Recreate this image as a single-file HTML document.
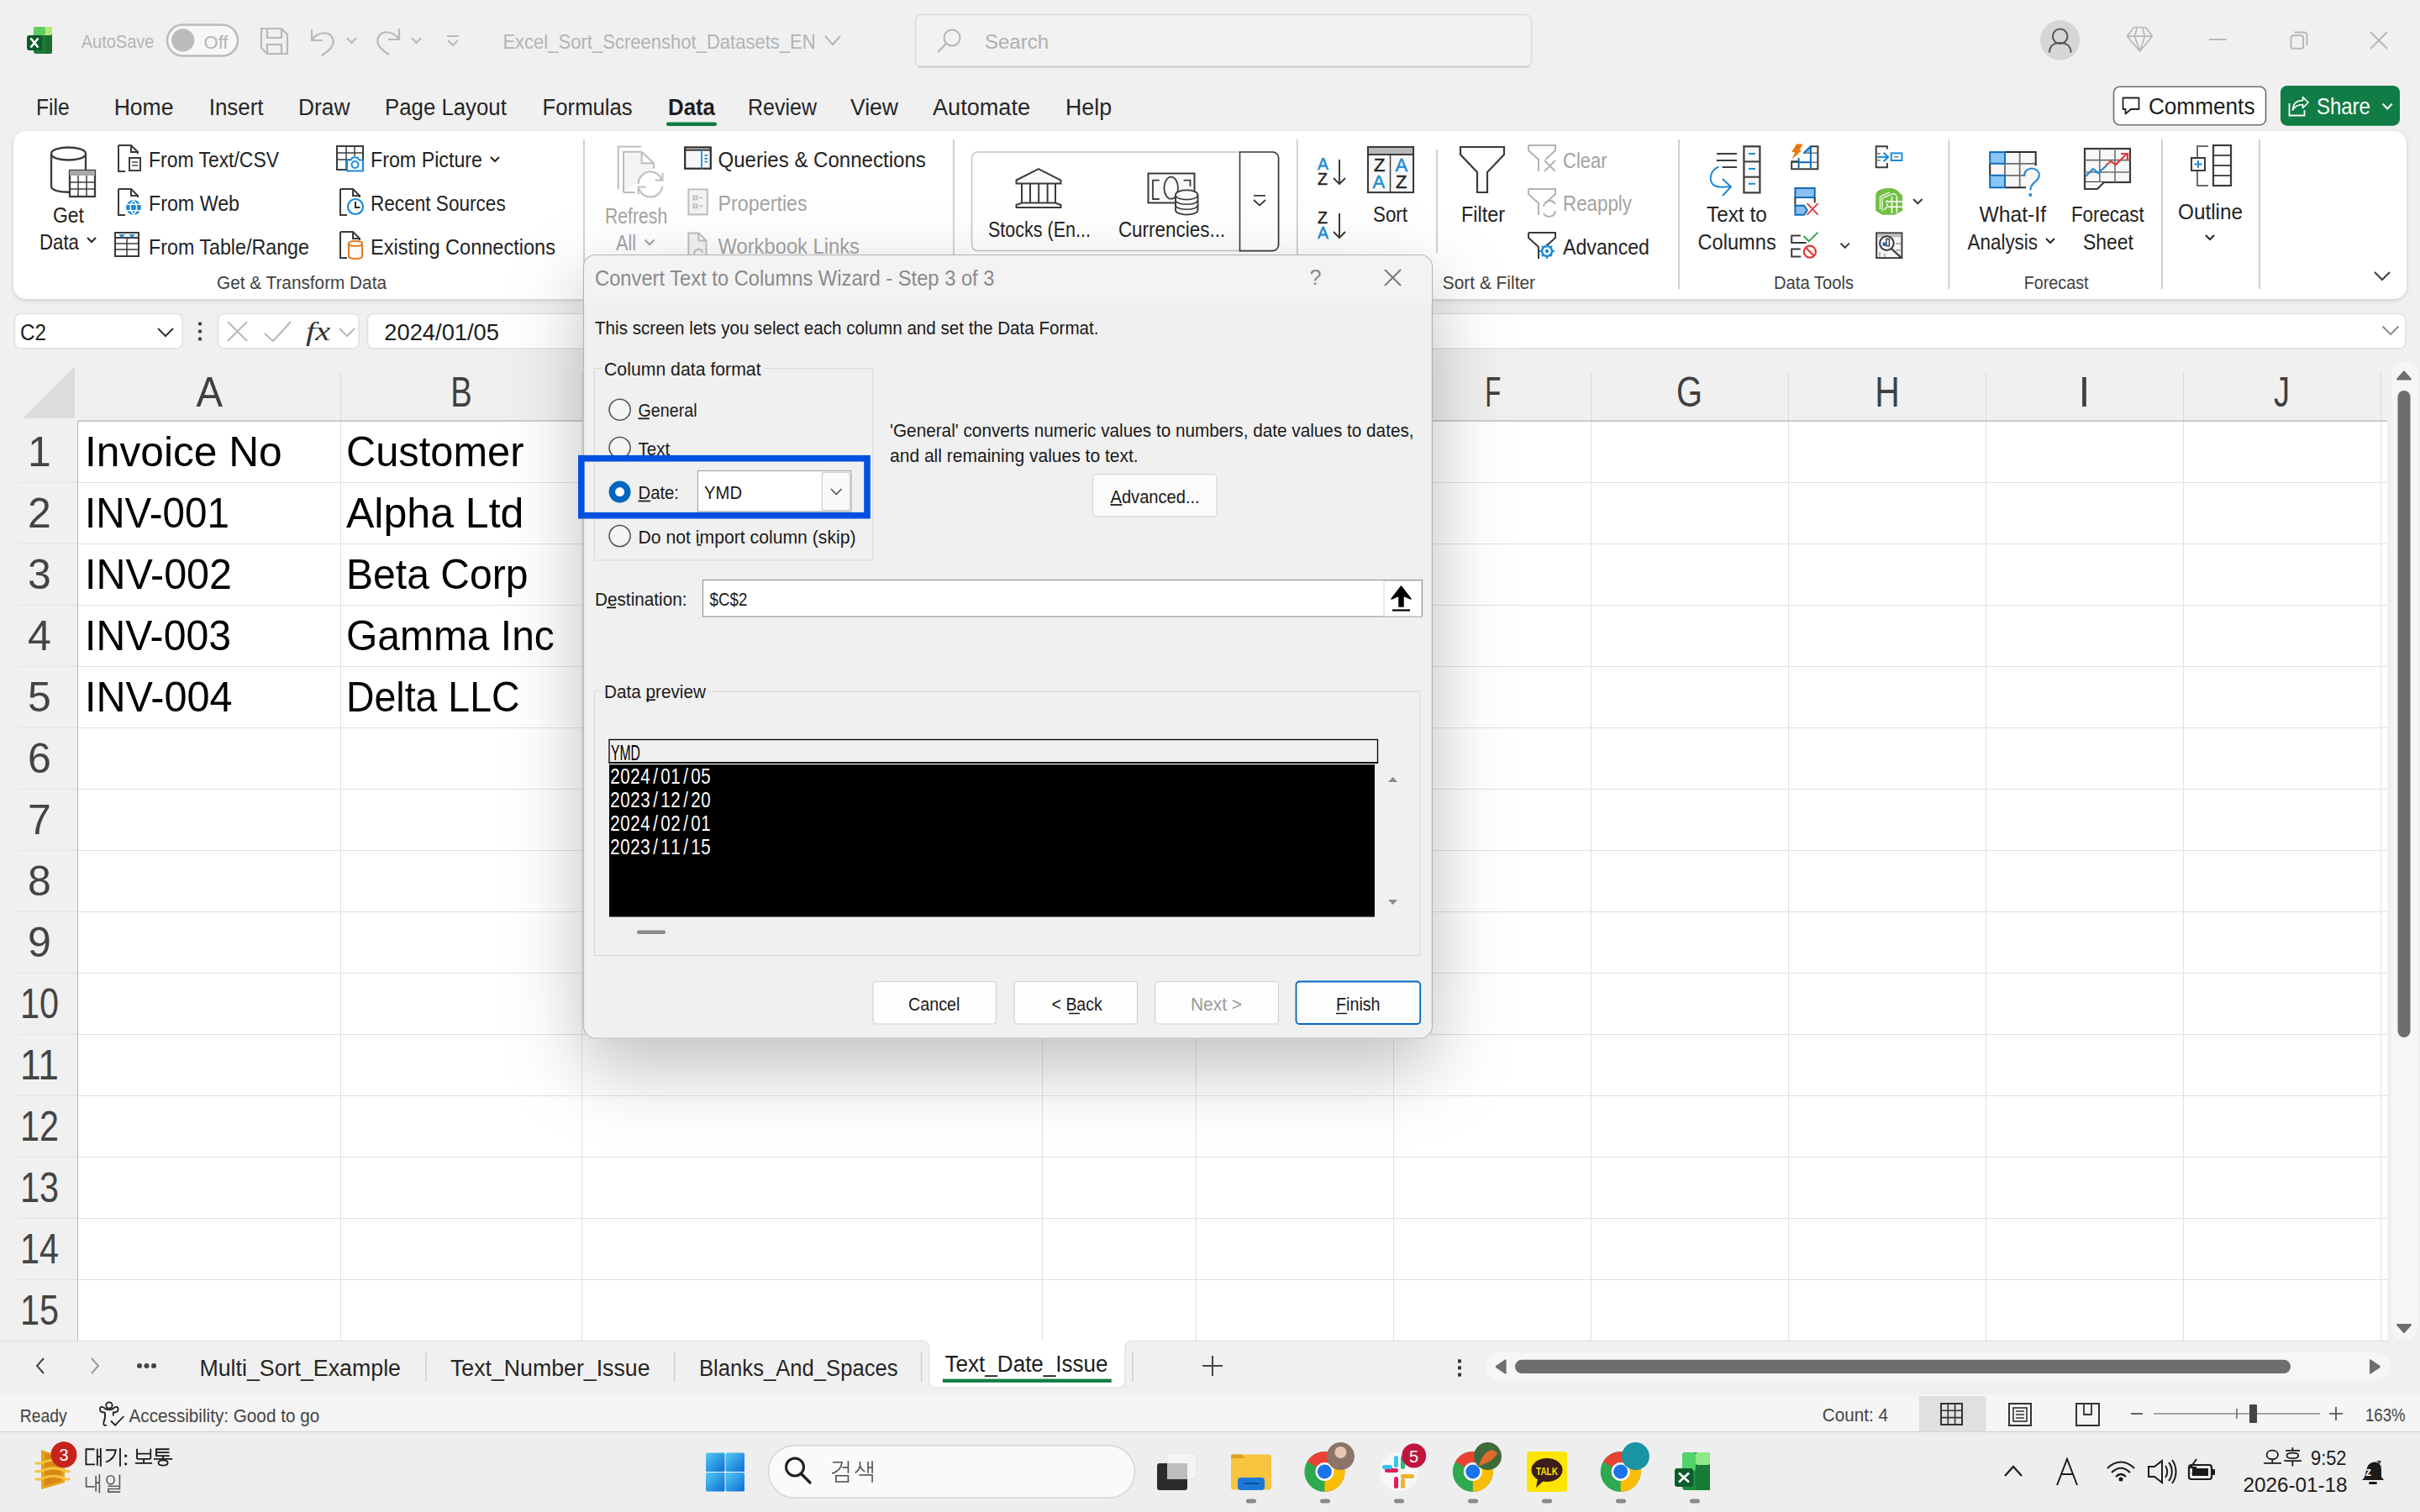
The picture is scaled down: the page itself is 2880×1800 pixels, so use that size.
<!DOCTYPE html>
<html><head><meta charset="utf-8"><style>html,body{margin:0;padding:0;background:#f0f0f0;overflow:hidden}svg{display:block}</style></head>
<body><svg width="2880" height="1800" viewBox="0 0 2880 1800"><rect x="0" y="0" width="2880" height="1800" rx="0" fill="#f0f0f0" stroke="none" stroke-width="1" /><rect x="92" y="501" width="2749" height="1095" rx="0" fill="#ffffff" stroke="none" stroke-width="1" /><line x1="92" y1="574.5" x2="2841" y2="574.5" stroke="#e1e1e1" stroke-width="1" /><line x1="92" y1="647.5" x2="2841" y2="647.5" stroke="#e1e1e1" stroke-width="1" /><line x1="92" y1="720.5" x2="2841" y2="720.5" stroke="#e1e1e1" stroke-width="1" /><line x1="92" y1="793.5" x2="2841" y2="793.5" stroke="#e1e1e1" stroke-width="1" /><line x1="92" y1="866.5" x2="2841" y2="866.5" stroke="#e1e1e1" stroke-width="1" /><line x1="92" y1="939.5" x2="2841" y2="939.5" stroke="#e1e1e1" stroke-width="1" /><line x1="92" y1="1012.5" x2="2841" y2="1012.5" stroke="#e1e1e1" stroke-width="1" /><line x1="92" y1="1085.5" x2="2841" y2="1085.5" stroke="#e1e1e1" stroke-width="1" /><line x1="92" y1="1158.5" x2="2841" y2="1158.5" stroke="#e1e1e1" stroke-width="1" /><line x1="92" y1="1231.5" x2="2841" y2="1231.5" stroke="#e1e1e1" stroke-width="1" /><line x1="92" y1="1304.5" x2="2841" y2="1304.5" stroke="#e1e1e1" stroke-width="1" /><line x1="92" y1="1377.5" x2="2841" y2="1377.5" stroke="#e1e1e1" stroke-width="1" /><line x1="92" y1="1450.5" x2="2841" y2="1450.5" stroke="#e1e1e1" stroke-width="1" /><line x1="92" y1="1523.5" x2="2841" y2="1523.5" stroke="#e1e1e1" stroke-width="1" /><line x1="92" y1="1596.5" x2="2841" y2="1596.5" stroke="#e1e1e1" stroke-width="1" /><line x1="405.5" y1="501" x2="405.5" y2="1596" stroke="#e1e1e1" stroke-width="1" /><line x1="692.5" y1="501" x2="692.5" y2="1596" stroke="#e1e1e1" stroke-width="1" /><line x1="1240.5" y1="501" x2="1240.5" y2="1596" stroke="#e1e1e1" stroke-width="1" /><line x1="1423.5" y1="501" x2="1423.5" y2="1596" stroke="#e1e1e1" stroke-width="1" /><line x1="1658.5" y1="501" x2="1658.5" y2="1596" stroke="#e1e1e1" stroke-width="1" /><line x1="1893.5" y1="501" x2="1893.5" y2="1596" stroke="#e1e1e1" stroke-width="1" /><line x1="2128.5" y1="501" x2="2128.5" y2="1596" stroke="#e1e1e1" stroke-width="1" /><line x1="2363.5" y1="501" x2="2363.5" y2="1596" stroke="#e1e1e1" stroke-width="1" /><line x1="2598.5" y1="501" x2="2598.5" y2="1596" stroke="#e1e1e1" stroke-width="1" /><line x1="2833.5" y1="501" x2="2833.5" y2="1596" stroke="#e1e1e1" stroke-width="1" /><line x1="20" y1="574.5" x2="92" y2="574.5" stroke="#e4e4e4" stroke-width="1" /><line x1="20" y1="647.5" x2="92" y2="647.5" stroke="#e4e4e4" stroke-width="1" /><line x1="20" y1="720.5" x2="92" y2="720.5" stroke="#e4e4e4" stroke-width="1" /><line x1="20" y1="793.5" x2="92" y2="793.5" stroke="#e4e4e4" stroke-width="1" /><line x1="20" y1="866.5" x2="92" y2="866.5" stroke="#e4e4e4" stroke-width="1" /><line x1="20" y1="939.5" x2="92" y2="939.5" stroke="#e4e4e4" stroke-width="1" /><line x1="20" y1="1012.5" x2="92" y2="1012.5" stroke="#e4e4e4" stroke-width="1" /><line x1="20" y1="1085.5" x2="92" y2="1085.5" stroke="#e4e4e4" stroke-width="1" /><line x1="20" y1="1158.5" x2="92" y2="1158.5" stroke="#e4e4e4" stroke-width="1" /><line x1="20" y1="1231.5" x2="92" y2="1231.5" stroke="#e4e4e4" stroke-width="1" /><line x1="20" y1="1304.5" x2="92" y2="1304.5" stroke="#e4e4e4" stroke-width="1" /><line x1="20" y1="1377.5" x2="92" y2="1377.5" stroke="#e4e4e4" stroke-width="1" /><line x1="20" y1="1450.5" x2="92" y2="1450.5" stroke="#e4e4e4" stroke-width="1" /><line x1="20" y1="1523.5" x2="92" y2="1523.5" stroke="#e4e4e4" stroke-width="1" /><line x1="20" y1="1596.5" x2="92" y2="1596.5" stroke="#e4e4e4" stroke-width="1" /><line x1="405.5" y1="443" x2="405.5" y2="501" stroke="#dadada" stroke-width="1" /><line x1="692.5" y1="443" x2="692.5" y2="501" stroke="#dadada" stroke-width="1" /><line x1="1240.5" y1="443" x2="1240.5" y2="501" stroke="#dadada" stroke-width="1" /><line x1="1423.5" y1="443" x2="1423.5" y2="501" stroke="#dadada" stroke-width="1" /><line x1="1658.5" y1="443" x2="1658.5" y2="501" stroke="#dadada" stroke-width="1" /><line x1="1893.5" y1="443" x2="1893.5" y2="501" stroke="#dadada" stroke-width="1" /><line x1="2128.5" y1="443" x2="2128.5" y2="501" stroke="#dadada" stroke-width="1" /><line x1="2363.5" y1="443" x2="2363.5" y2="501" stroke="#dadada" stroke-width="1" /><line x1="2598.5" y1="443" x2="2598.5" y2="501" stroke="#dadada" stroke-width="1" /><line x1="2833.5" y1="443" x2="2833.5" y2="501" stroke="#dadada" stroke-width="1" /><line x1="92" y1="501.3" x2="2841" y2="501.3" stroke="#c4c4c4" stroke-width="1.4" /><line x1="92.5" y1="501" x2="92.5" y2="1596" stroke="#b4b4b4" stroke-width="1" /><path d="M89 436 L89 498 L27 498 Z" fill="#dcdcdc" stroke="none" stroke-width="1" /><text x="249.3" y="483.8" font-family="Liberation Sans" font-size="50" fill="#404040" text-anchor="middle" textLength="31.5" lengthAdjust="spacingAndGlyphs">A</text><text x="549" y="483.8" font-family="Liberation Sans" font-size="50" fill="#404040" text-anchor="middle" textLength="25.5" lengthAdjust="spacingAndGlyphs">B</text><text x="966" y="483.8" font-family="Liberation Sans" font-size="50" fill="#404040" text-anchor="middle">C</text><text x="1331.5" y="483.8" font-family="Liberation Sans" font-size="50" fill="#404040" text-anchor="middle">D</text><text x="1540.8" y="483.8" font-family="Liberation Sans" font-size="50" fill="#404040" text-anchor="middle">E</text><text x="1776.8" y="483.8" font-family="Liberation Sans" font-size="50" fill="#404040" text-anchor="middle" textLength="19" lengthAdjust="spacingAndGlyphs">F</text><text x="2010.5" y="483.8" font-family="Liberation Sans" font-size="50" fill="#404040" text-anchor="middle" textLength="31" lengthAdjust="spacingAndGlyphs">G</text><text x="2246" y="483.8" font-family="Liberation Sans" font-size="50" fill="#404040" text-anchor="middle" textLength="29.5" lengthAdjust="spacingAndGlyphs">H</text><text x="2480.5" y="483.8" font-family="Liberation Sans" font-size="50" fill="#404040" text-anchor="middle">I</text><text x="2715.4" y="483.8" font-family="Liberation Sans" font-size="50" fill="#404040" text-anchor="middle" textLength="19" lengthAdjust="spacingAndGlyphs">J</text><text x="47" y="555.0" font-family="Liberation Sans" font-size="50" fill="#444444" text-anchor="middle">1</text><text x="47" y="628.0" font-family="Liberation Sans" font-size="50" fill="#444444" text-anchor="middle">2</text><text x="47" y="701.0" font-family="Liberation Sans" font-size="50" fill="#444444" text-anchor="middle">3</text><text x="47" y="774.0" font-family="Liberation Sans" font-size="50" fill="#444444" text-anchor="middle">4</text><text x="47" y="847.0" font-family="Liberation Sans" font-size="50" fill="#444444" text-anchor="middle">5</text><text x="47" y="920.0" font-family="Liberation Sans" font-size="50" fill="#444444" text-anchor="middle">6</text><text x="47" y="993.0" font-family="Liberation Sans" font-size="50" fill="#444444" text-anchor="middle">7</text><text x="47" y="1066.0" font-family="Liberation Sans" font-size="50" fill="#444444" text-anchor="middle">8</text><text x="47" y="1139.0" font-family="Liberation Sans" font-size="50" fill="#444444" text-anchor="middle">9</text><text x="47" y="1212.0" font-family="Liberation Sans" font-size="50" fill="#444444" text-anchor="middle" textLength="46" lengthAdjust="spacingAndGlyphs">10</text><text x="47" y="1285.0" font-family="Liberation Sans" font-size="50" fill="#444444" text-anchor="middle" textLength="46" lengthAdjust="spacingAndGlyphs">11</text><text x="47" y="1358.0" font-family="Liberation Sans" font-size="50" fill="#444444" text-anchor="middle" textLength="46" lengthAdjust="spacingAndGlyphs">12</text><text x="47" y="1431.0" font-family="Liberation Sans" font-size="50" fill="#444444" text-anchor="middle" textLength="46" lengthAdjust="spacingAndGlyphs">13</text><text x="47" y="1504.0" font-family="Liberation Sans" font-size="50" fill="#444444" text-anchor="middle" textLength="46" lengthAdjust="spacingAndGlyphs">14</text><text x="47" y="1577.0" font-family="Liberation Sans" font-size="50" fill="#444444" text-anchor="middle" textLength="46" lengthAdjust="spacingAndGlyphs">15</text><text x="101.0" y="554.8" font-family="Liberation Sans" font-size="50" fill="#000000" font-weight="normal" font-style="normal" textLength="234.7" lengthAdjust="spacingAndGlyphs" >Invoice No</text><text x="412.0" y="554.8" font-family="Liberation Sans" font-size="50" fill="#000000" font-weight="normal" font-style="normal" textLength="211.4" lengthAdjust="spacingAndGlyphs" >Customer</text><text x="101.0" y="627.8" font-family="Liberation Sans" font-size="50" fill="#000000" font-weight="normal" font-style="normal" textLength="171.9" lengthAdjust="spacingAndGlyphs" >INV-001</text><text x="412.0" y="627.8" font-family="Liberation Sans" font-size="50" fill="#000000" font-weight="normal" font-style="normal" textLength="211.4" lengthAdjust="spacingAndGlyphs" >Alpha Ltd</text><text x="101.0" y="700.8" font-family="Liberation Sans" font-size="50" fill="#000000" font-weight="normal" font-style="normal" textLength="175.0" lengthAdjust="spacingAndGlyphs" >INV-002</text><text x="412.0" y="700.8" font-family="Liberation Sans" font-size="50" fill="#000000" font-weight="normal" font-style="normal" textLength="216.4" lengthAdjust="spacingAndGlyphs" >Beta Corp</text><text x="101.0" y="773.8" font-family="Liberation Sans" font-size="50" fill="#000000" font-weight="normal" font-style="normal" textLength="174.0" lengthAdjust="spacingAndGlyphs" >INV-003</text><text x="412.0" y="773.8" font-family="Liberation Sans" font-size="50" fill="#000000" font-weight="normal" font-style="normal" textLength="247.8" lengthAdjust="spacingAndGlyphs" >Gamma Inc</text><text x="101.0" y="846.8" font-family="Liberation Sans" font-size="50" fill="#000000" font-weight="normal" font-style="normal" textLength="175.5" lengthAdjust="spacingAndGlyphs" >INV-004</text><text x="412.0" y="846.8" font-family="Liberation Sans" font-size="50" fill="#000000" font-weight="normal" font-style="normal" textLength="206.5" lengthAdjust="spacingAndGlyphs" >Delta LLC</text><rect x="40" y="32" width="22" height="32" rx="3" fill="#1b7a37" stroke="none" stroke-width="1" /><rect x="46" y="32" width="16" height="10" rx="2" fill="#b7e77a" stroke="none" stroke-width="1" /><rect x="40" y="32" width="14" height="10" rx="2" fill="#5ccf5f" stroke="none" stroke-width="1" /><rect x="54" y="42" width="8" height="22" rx="2" fill="#1e6e31" stroke="none" stroke-width="1" /><rect x="32" y="42" width="18" height="18" rx="3" fill="#0e5a2b" stroke="none" stroke-width="1" /><path d="M36.5 45.5 L45.5 56.5 M45.5 45.5 L36.5 56.5" fill="none" stroke="#ffffff" stroke-width="2.6" /><text x="96.7" y="57.0" font-family="Liberation Sans" font-size="21.5" fill="#b5b5b5" font-weight="normal" font-style="normal" textLength="86.8" lengthAdjust="spacingAndGlyphs" >AutoSave</text><rect x="199" y="29.5" width="84" height="37" rx="18.5" fill="#f7f7f7" stroke="#bbbbbb" stroke-width="2.5" /><circle cx="217.7" cy="47.9" r="13.6" fill="#bbbbbb" stroke="none" stroke-width="1" /><text x="242.5" y="57.5" font-family="Liberation Sans" font-size="21.5" fill="#b5b5b5" font-weight="normal" font-style="normal" textLength="29.0" lengthAdjust="spacingAndGlyphs" >Off</text><path d="M311 34 H335 L342 41 V64 H318 L311 57 Z M318 34 V45 H335 V34 M318 64 V53 H335 V64" fill="none" stroke="#b9b9b9" stroke-width="2.2" /><path d="M371 35 V48 H384 M371 48 C377 38 392 36 396 46 C399 54 392 60 383 66" fill="none" stroke="#b9b9b9" stroke-width="2.2" /><path d="M413 45 L418.5 51 L424 45" fill="none" stroke="#b9b9b9" stroke-width="2" /><path d="M475 34 V47 H462 M475 47 C469 37 454 35 450 45 C447 53 454 59 463 65" fill="none" stroke="#b9b9b9" stroke-width="2.2" /><path d="M490 45 L495.5 51 L501 45" fill="none" stroke="#b9b9b9" stroke-width="2" /><path d="M532 43 H546 M533 48 L539 54 L545 48" fill="none" stroke="#b9b9b9" stroke-width="2" /><text x="598.4" y="58.2" font-family="Liberation Sans" font-size="24.5" fill="#b3b3b3" font-weight="normal" font-style="normal" textLength="372.3" lengthAdjust="spacingAndGlyphs" >Excel_Sort_Screenshot_Datasets_EN</text><path d="M982 43 L991 53 L1000 43" fill="none" stroke="#b3b3b3" stroke-width="2" /><rect x="1089.5" y="17.5" width="733" height="62" rx="7" fill="#f2f2f2" stroke="#dcdcdc" stroke-width="1.5" /><line x1="1092" y1="79.5" x2="1820" y2="79.5" stroke="#cfcfcf" stroke-width="2" /><circle cx="1133" cy="45" r="9.5" fill="none" stroke="#b5b5b5" stroke-width="2" /><line x1="1126" y1="52" x2="1116" y2="62" stroke="#b5b5b5" stroke-width="2.2" /><text x="1172.0" y="58.0" font-family="Liberation Sans" font-size="24.5" fill="#b0b0b0" font-weight="normal" font-style="normal" textLength="76.0" lengthAdjust="spacingAndGlyphs" >Search</text><circle cx="2451.6" cy="47.8" r="23.7" fill="#d6d6d6" stroke="none" stroke-width="1" /><circle cx="2451.7" cy="43.2" r="8.8" fill="none" stroke="#555555" stroke-width="2" /><path d="M2439 62.5 C2439 54.5 2444.5 51 2451.7 51 C2459 51 2464.5 54.5 2464.5 62.5" fill="none" stroke="#555555" stroke-width="2" /><path d="M2531.5 43.2 L2539.5 32.5 H2553.5 L2561.5 43.2 L2546.5 61 Z M2531.5 43.2 H2561.5 M2543.5 32.5 L2540.5 43.2 L2546.5 61 L2552.5 43.2 L2549.5 32.5" fill="none" stroke="#b8b8b8" stroke-width="1.7" stroke-linejoin="round"/><line x1="2629" y1="47" x2="2650" y2="47" stroke="#b8b8b8" stroke-width="2" /><rect x="2726.5" y="42.3" width="14.5" height="15.4" rx="2.5" fill="none" stroke="#b8b8b8" stroke-width="2" /><path d="M2730.5 38.6 H2741.5 Q2745.5 38.6 2745.5 42.6 V54" fill="none" stroke="#b8b8b8" stroke-width="2" /><path d="M2821 38 L2841 58 M2841 38 L2821 58" fill="none" stroke="#b8b8b8" stroke-width="2" /><text x="43.0" y="136.8" font-family="Liberation Sans" font-size="27" fill="#262626" font-weight="normal" font-style="normal" textLength="39.7" lengthAdjust="spacingAndGlyphs" >File</text><text x="135.7" y="136.8" font-family="Liberation Sans" font-size="27" fill="#262626" font-weight="normal" font-style="normal" textLength="70.8" lengthAdjust="spacingAndGlyphs" >Home</text><text x="248.7" y="136.8" font-family="Liberation Sans" font-size="27" fill="#262626" font-weight="normal" font-style="normal" textLength="64.9" lengthAdjust="spacingAndGlyphs" >Insert</text><text x="355.0" y="136.8" font-family="Liberation Sans" font-size="27" fill="#262626" font-weight="normal" font-style="normal" textLength="61.5" lengthAdjust="spacingAndGlyphs" >Draw</text><text x="458.0" y="136.8" font-family="Liberation Sans" font-size="27" fill="#262626" font-weight="normal" font-style="normal" textLength="144.8" lengthAdjust="spacingAndGlyphs" >Page Layout</text><text x="645.6" y="136.8" font-family="Liberation Sans" font-size="27" fill="#262626" font-weight="normal" font-style="normal" textLength="107.1" lengthAdjust="spacingAndGlyphs" >Formulas</text><text x="890.0" y="136.8" font-family="Liberation Sans" font-size="27" fill="#262626" font-weight="normal" font-style="normal" textLength="82.0" lengthAdjust="spacingAndGlyphs" >Review</text><text x="1012.0" y="136.8" font-family="Liberation Sans" font-size="27" fill="#262626" font-weight="normal" font-style="normal" textLength="57.0" lengthAdjust="spacingAndGlyphs" >View</text><text x="1110.0" y="136.8" font-family="Liberation Sans" font-size="27" fill="#262626" font-weight="normal" font-style="normal" textLength="116.0" lengthAdjust="spacingAndGlyphs" >Automate</text><text x="1268.0" y="136.8" font-family="Liberation Sans" font-size="27" fill="#262626" font-weight="normal" font-style="normal" textLength="55.0" lengthAdjust="spacingAndGlyphs" >Help</text><text x="795.0" y="136.8" font-family="Liberation Sans" font-size="27" fill="#1e1e1e" font-weight="bold" font-style="normal" textLength="56.0" lengthAdjust="spacingAndGlyphs" >Data</text><rect x="793" y="145.5" width="60" height="4.5" rx="2" fill="#107c41" stroke="none" stroke-width="1" /><rect x="2515.5" y="103.3" width="181" height="45.5" rx="7" fill="#ffffff" stroke="#6e6e6e" stroke-width="1.6" /><path d="M2526.5 116.5 H2545.5 V130 H2536 L2529.5 135.5 V130 H2526.5 Z" fill="none" stroke="#242424" stroke-width="1.8" stroke-linejoin="round"/><text x="2556.9" y="136.0" font-family="Liberation Sans" font-size="27" fill="#1e1e1e" font-weight="normal" font-style="normal" textLength="126.6" lengthAdjust="spacingAndGlyphs" >Comments</text><rect x="2714" y="102" width="142" height="47.7" rx="8" fill="#117c45" stroke="none" stroke-width="1" /><path d="M2724.5 123 V137.5 H2742.5 V131" fill="none" stroke="#ffffff" stroke-width="1.8" /><path d="M2728.5 131 C2729 123 2734 119.5 2740.5 119.5 V115.5 L2747 122 L2740.5 128.5 V124.5 C2735 124.5 2731 126.5 2728.5 131 Z" fill="none" stroke="#ffffff" stroke-width="1.7" stroke-linejoin="round"/><text x="2756.9" y="135.5" font-family="Liberation Sans" font-size="27" fill="#ffffff" font-weight="normal" font-style="normal" textLength="64.1" lengthAdjust="spacingAndGlyphs" >Share</text><path d="M2835.6 123.5 L2841.2 129.5 L2846.8 123.5" fill="none" stroke="#ffffff" stroke-width="2" /><defs><filter id="rsh" x="-5%" y="-20%" width="110%" height="150%"><feDropShadow dx="0" dy="1.5" stdDeviation="2.5" flood-color="#000" flood-opacity="0.16"/></filter><filter id="dsh" x="-30%" y="-30%" width="160%" height="170%"><feDropShadow dx="0" dy="34" stdDeviation="44" flood-color="#000" flood-opacity="0.25"/></filter></defs><rect x="16" y="156" width="2848" height="200" rx="15" fill="#ffffff" stroke="none" stroke-width="1" filter="url(#rsh)"/><line x1="695" y1="166" x2="695" y2="344" stroke="#d1d1d1" stroke-width="2" /><line x1="1135" y1="166" x2="1135" y2="344" stroke="#d1d1d1" stroke-width="2" /><line x1="1543.8" y1="166" x2="1543.8" y2="344" stroke="#d1d1d1" stroke-width="2" /><line x1="1998" y1="166" x2="1998" y2="344" stroke="#d1d1d1" stroke-width="2" /><line x1="2319.4" y1="166" x2="2319.4" y2="344" stroke="#d1d1d1" stroke-width="2" /><line x1="2573" y1="166" x2="2573" y2="344" stroke="#d1d1d1" stroke-width="2" /><line x1="2689" y1="166" x2="2689" y2="344" stroke="#d1d1d1" stroke-width="2" /><line x1="1710" y1="178.5" x2="1710" y2="301" stroke="#d1d1d1" stroke-width="2" /><path d="M61 183 V222 C61 231 102 231 102 222 M61 183 C61 173 102 173 102 183 C102 193 61 193 61 183 M102 183 V202" fill="none" stroke="#3b3b3b" stroke-width="2.3" /><rect x="83" y="203" width="30" height="31" rx="0" fill="#ffffff" stroke="#3b3b3b" stroke-width="2.3" /><rect x="83" y="203" width="30" height="6" rx="0" fill="#a8a8a8" stroke="none" stroke-width="1" /><line x1="93" y1="209" x2="93" y2="234" stroke="#3b3b3b" stroke-width="1.5" /><line x1="103" y1="209" x2="103" y2="234" stroke="#3b3b3b" stroke-width="1.5" /><line x1="83" y1="217" x2="113" y2="217" stroke="#3b3b3b" stroke-width="1.5" /><line x1="83" y1="225" x2="113" y2="225" stroke="#3b3b3b" stroke-width="1.5" /><text x="63.0" y="264.5" font-family="Liberation Sans" font-size="25" fill="#242424" font-weight="normal" font-style="normal" textLength="37.0" lengthAdjust="spacingAndGlyphs" >Get</text><text x="47.0" y="296.8" font-family="Liberation Sans" font-size="25" fill="#242424" font-weight="normal" font-style="normal" textLength="47.0" lengthAdjust="spacingAndGlyphs" >Data</text><path d="M104 283 L109 288 L114 283" fill="none" stroke="#242424" stroke-width="2" /><path d="M141 173 H156 L164 181 V183 M156 173 V181 H164 M141 173 V204 H149" fill="none" stroke="#3b3b3b" stroke-width="2" /><rect x="154" y="188" width="13" height="15" rx="0" fill="#ffffff" stroke="#3b3b3b" stroke-width="2" /><line x1="157" y1="193" x2="164" y2="193" stroke="#3b3b3b" stroke-width="1.4" /><line x1="157" y1="197" x2="164" y2="197" stroke="#3b3b3b" stroke-width="1.4" /><text x="177.0" y="198.7" font-family="Liberation Sans" font-size="25" fill="#242424" font-weight="normal" font-style="normal" textLength="155.0" lengthAdjust="spacingAndGlyphs" >From Text/CSV</text><path d="M141 225 H156 L164 233 V235 M156 225 V233 H164 M141 225 V256 H149" fill="none" stroke="#3b3b3b" stroke-width="2" /><circle cx="158.9" cy="247" r="8.9" fill="#1f87d3" stroke="none" stroke-width="1" /><path d="M150.5 243.3 H167.3 M150.5 250.7 H167.3 M158.9 238.8 C154 243 154 251 158.9 255.2 C163.8 251 163.8 243 158.9 238.8" fill="none" stroke="#ffffff" stroke-width="1.5" /><text x="177.0" y="250.7" font-family="Liberation Sans" font-size="25" fill="#242424" font-weight="normal" font-style="normal" textLength="108.0" lengthAdjust="spacingAndGlyphs" >From Web</text><rect x="137" y="277" width="28" height="28" rx="0" fill="#ffffff" stroke="#3b3b3b" stroke-width="2" /><rect x="137" y="277" width="28" height="6" rx="0" fill="#ffffff" stroke="#3b3b3b" stroke-width="2" /><path d="M141 279 L145 283 L149 279 Z M153 279 L157 283 L161 279 Z" fill="#1d8ad8" stroke="none" stroke-width="1" /><line x1="137" y1="290" x2="165" y2="290" stroke="#3b3b3b" stroke-width="1.5" /><line x1="137" y1="297" x2="165" y2="297" stroke="#3b3b3b" stroke-width="1.5" /><line x1="151" y1="283" x2="151" y2="305" stroke="#3b3b3b" stroke-width="1.5" /><text x="177.0" y="302.7" font-family="Liberation Sans" font-size="25" fill="#242424" font-weight="normal" font-style="normal" textLength="191.0" lengthAdjust="spacingAndGlyphs" >From Table/Range</text><rect x="401" y="174" width="31" height="28" rx="0" fill="#ffffff" stroke="#3b3b3b" stroke-width="2" /><line x1="401" y1="182" x2="432" y2="182" stroke="#3b3b3b" stroke-width="1.5" /><line x1="401" y1="190" x2="420" y2="190" stroke="#3b3b3b" stroke-width="1.5" /><line x1="412" y1="174" x2="412" y2="202" stroke="#3b3b3b" stroke-width="1.5" /><line x1="422" y1="174" x2="422" y2="186" stroke="#3b3b3b" stroke-width="1.5" /><path d="M413 190.5 H417.5 L419.5 187.5 H425.5 L427.5 190.5 H432 V203.5 H413 Z" fill="#ffffff" stroke="#1d8ad8" stroke-width="2.2" stroke-linejoin="round"/><circle cx="422.5" cy="196" r="4" fill="none" stroke="#1d8ad8" stroke-width="2" /><text x="441.0" y="198.7" font-family="Liberation Sans" font-size="25" fill="#242424" font-weight="normal" font-style="normal" textLength="133.0" lengthAdjust="spacingAndGlyphs" >From Picture</text><path d="M584 187 L589 192 L594 187" fill="none" stroke="#242424" stroke-width="2" /><path d="M405 225 H420 L428 233 V235 M420 225 V233 H428 M405 225 V256 H413" fill="none" stroke="#3b3b3b" stroke-width="2" /><circle cx="423" cy="246" r="9" fill="#ffffff" stroke="#1d8ad8" stroke-width="2.2" /><path d="M423 240 V247 H428.5" fill="none" stroke="#2b2b2b" stroke-width="2" /><text x="441.0" y="250.7" font-family="Liberation Sans" font-size="25" fill="#242424" font-weight="normal" font-style="normal" textLength="160.7" lengthAdjust="spacingAndGlyphs" >Recent Sources</text><path d="M405 276 H420 L428 284 V286 M420 276 V284 H428 M405 276 V307 H413" fill="none" stroke="#3b3b3b" stroke-width="2" /><path d="M415 290 V305 C415 309 431 309 431 305 V290 C431 286 415 286 415 290 C415 294 431 294 431 290" fill="#ffffff" stroke="#e07b24" stroke-width="2.2" /><text x="441.0" y="302.7" font-family="Liberation Sans" font-size="25" fill="#242424" font-weight="normal" font-style="normal" textLength="220.0" lengthAdjust="spacingAndGlyphs" >Existing Connections</text><text x="258.0" y="343.5" font-family="Liberation Sans" font-size="21.5" fill="#424242" font-weight="normal" font-style="normal" textLength="202.0" lengthAdjust="spacingAndGlyphs" >Get &amp; Transform Data</text><path d="M735.7 225.5 V174.4 H763" fill="none" stroke="#bdbdbd" stroke-width="2" /><path d="M742 229 V180.8 H763.6 L778 194.2 V200.7 M763.6 180.8 V194.2 H778 M742 229 H755.7" fill="#f3f3f3" stroke="#bdbdbd" stroke-width="2" /><path d="M759.7 219 A14.3 14.3 0 0 1 787.5 214 M788.3 222 A14.3 14.3 0 0 1 760.6 225" fill="none" stroke="#bdbdbd" stroke-width="2" /><path d="M779.5 214.6 H788.5 V206 M759.7 231.4 V222.5 H768.6" fill="none" stroke="#bdbdbd" stroke-width="2" /><text x="720.0" y="265.7" font-family="Liberation Sans" font-size="25" fill="#a3a3a3" font-weight="normal" font-style="normal" textLength="74.2" lengthAdjust="spacingAndGlyphs" >Refresh</text><text x="733.0" y="297.9" font-family="Liberation Sans" font-size="25" fill="#a3a3a3" font-weight="normal" font-style="normal" textLength="24.2" lengthAdjust="spacingAndGlyphs" >All</text><path d="M767.6 285.5 L773 291.2 L778.5 285.5" fill="none" stroke="#a3a3a3" stroke-width="2" /><rect x="815.2" y="175.4" width="30.6" height="25.3" rx="0" fill="#f7f7f7" stroke="#2b2b2b" stroke-width="2.2" /><line x1="815.2" y1="178.6" x2="845.8" y2="178.6" stroke="#2b2b2b" stroke-width="2" /><line x1="835" y1="178.6" x2="835" y2="200.7" stroke="#1d8ad8" stroke-width="1.8" /><path d="M838.5 184.8 H842 M838.5 188.8 H842 M838.5 192.7 H842" fill="none" stroke="#1d8ad8" stroke-width="1.8" /><text x="854.5" y="198.7" font-family="Liberation Sans" font-size="25" fill="#242424" font-weight="normal" font-style="normal" textLength="247.3" lengthAdjust="spacingAndGlyphs" >Queries &amp; Connections</text><rect x="819.4" y="225.5" width="22.4" height="29.9" rx="0" fill="#f3f3f3" stroke="#bdbdbd" stroke-width="2" /><rect x="825.4" y="233.4" width="4.2" height="4" rx="0" fill="none" stroke="#bdbdbd" stroke-width="1.8" /><rect x="825.4" y="243.3" width="4.2" height="4" rx="0" fill="none" stroke="#bdbdbd" stroke-width="1.8" /><path d="M832.6 235.4 H836 M832.6 245.3 H836" fill="none" stroke="#bdbdbd" stroke-width="1.8" /><text x="854.5" y="250.5" font-family="Liberation Sans" font-size="25" fill="#a3a3a3" font-weight="normal" font-style="normal" textLength="106.2" lengthAdjust="spacingAndGlyphs" >Properties</text><path d="M819.4 303 V277.6 H831.5 L840.5 286.5 V303 M831.5 277.6 V286.5 H840.5" fill="#f3f3f3" stroke="#bdbdbd" stroke-width="2" /><path d="M826 303 C826 295 836 295 836 301" fill="none" stroke="#bdbdbd" stroke-width="2" /><text x="854.5" y="302.2" font-family="Liberation Sans" font-size="25" fill="#a3a3a3" font-weight="normal" font-style="normal" textLength="168.5" lengthAdjust="spacingAndGlyphs" >Workbook Links</text><rect x="1156.5" y="181" width="365.5" height="117.6" rx="7" fill="#ffffff" stroke="#c4c4c4" stroke-width="1.5" /><path d="M1475.5 181 H1514.5 A7 7 0 0 1 1521.5 188 V291.6 A7 7 0 0 1 1514.5 298.6 H1475.5 Z" fill="#ffffff" stroke="#3b3b3b" stroke-width="1.6" /><path d="M1492 232.8 H1506 M1492 238 L1499 244.5 L1506 238" fill="none" stroke="#3b3b3b" stroke-width="1.8" /><path d="M1209.5 214.5 L1235.9 201 L1262.5 214.5 V218.5 H1209.5 Z" fill="#fafafa" stroke="#3b3b3b" stroke-width="2" /><path d="M1216 241.5 H1256 L1262.5 244 V247 H1209.5 V244 Z" fill="#fafafa" stroke="#3b3b3b" stroke-width="2" /><line x1="1216" y1="218.5" x2="1216" y2="241.5" stroke="#3b3b3b" stroke-width="2" /><line x1="1226" y1="218.5" x2="1226" y2="241.5" stroke="#3b3b3b" stroke-width="2" /><line x1="1236.2" y1="218.5" x2="1236.2" y2="241.5" stroke="#3b3b3b" stroke-width="2" /><line x1="1246.6" y1="218.5" x2="1246.6" y2="241.5" stroke="#3b3b3b" stroke-width="2" /><line x1="1256" y1="218.5" x2="1256" y2="241.5" stroke="#3b3b3b" stroke-width="2" /><text x="1176.0" y="281.6" font-family="Liberation Sans" font-size="25" fill="#242424" font-weight="normal" font-style="normal" textLength="121.9" lengthAdjust="spacingAndGlyphs" >Stocks (En...</text><rect x="1366.5" y="206.5" width="55" height="35" rx="0" fill="#fafafa" stroke="#3b3b3b" stroke-width="2" /><path d="M1379.7 214.6 H1372 V237 H1379.7 M1408.6 214.6 H1416.5 V222" fill="none" stroke="#3b3b3b" stroke-width="1.8" /><ellipse cx="1393.7" cy="223.7" rx="8.3" ry="13" fill="none" stroke="#3b3b3b" stroke-width="1.8"/><path d="M1399 232 V250 C1399 257.5 1425.5 257.5 1425.5 250 V232 C1425.5 224.5 1399 224.5 1399 232 Z" fill="#fafafa" stroke="#3b3b3b" stroke-width="1.9" /><path d="M1399 232 C1399 239.5 1425.5 239.5 1425.5 232 M1399 238 C1399 245 1425.5 245 1425.5 238 M1399 244 C1399 251 1425.5 251 1425.5 244" fill="none" stroke="#3b3b3b" stroke-width="1.7" /><text x="1330.9" y="281.6" font-family="Liberation Sans" font-size="25" fill="#242424" font-weight="normal" font-style="normal" textLength="127.3" lengthAdjust="spacingAndGlyphs" >Currencies...</text><text x="1568" y="201.5" font-family="Liberation Sans" font-size="19.5" fill="#1d8ad8" stroke="#1d8ad8" stroke-width="0.5">A</text><text x="1568" y="219.5" font-family="Liberation Sans" font-size="19.5" fill="#242424" stroke="#242424" stroke-width="0.5">Z</text><path d="M1594 190 V219 M1587 212 L1594 219 L1601 212" fill="none" stroke="#3b3b3b" stroke-width="2" /><text x="1568" y="265.5" font-family="Liberation Sans" font-size="19.5" fill="#242424" stroke="#242424" stroke-width="0.5">Z</text><text x="1568" y="283.5" font-family="Liberation Sans" font-size="19.5" fill="#1d8ad8" stroke="#1d8ad8" stroke-width="0.5">A</text><path d="M1594 254 V283 M1587 276 L1594 283 L1601 276" fill="none" stroke="#3b3b3b" stroke-width="2" /><rect x="1628" y="175" width="54" height="54" rx="0" fill="#ffffff" stroke="#3b3b3b" stroke-width="2.2" /><rect x="1629" y="176" width="52" height="8" rx="0" fill="#b8b8b8" stroke="none" stroke-width="1" /><line x1="1628" y1="184" x2="1682" y2="184" stroke="#3b3b3b" stroke-width="1.8" /><line x1="1654.5" y1="184" x2="1654.5" y2="229" stroke="#3b3b3b" stroke-width="2" /><rect x="1629.2" y="185.2" width="24.4" height="42.8" rx="0" fill="#f7f7f7" stroke="none" stroke-width="1" /><rect x="1655.6" y="185.2" width="25.2" height="42.8" rx="0" fill="#f7f7f7" stroke="none" stroke-width="1" /><g stroke-width="0.5"><text x="1635" y="203.7" font-family="Liberation Sans" font-size="22" fill="#242424" stroke="#242424">Z</text><text x="1660.5" y="203.7" font-family="Liberation Sans" font-size="22" fill="#1d8ad8" stroke="#1d8ad8">A</text><text x="1633.5" y="223.9" font-family="Liberation Sans" font-size="22" fill="#1d8ad8" stroke="#1d8ad8">A</text><text x="1661" y="223.9" font-family="Liberation Sans" font-size="22" fill="#242424" stroke="#242424">Z</text></g><text x="1634.0" y="264.0" font-family="Liberation Sans" font-size="25" fill="#242424" font-weight="normal" font-style="normal" textLength="41.0" lengthAdjust="spacingAndGlyphs" >Sort</text><path d="M1738 175 H1790 V184 L1770 205 V229 H1758 V205 L1738 184 Z" fill="#ffffff" stroke="#3b3b3b" stroke-width="2.2" /><text x="1739.0" y="264.0" font-family="Liberation Sans" font-size="25" fill="#242424" font-weight="normal" font-style="normal" textLength="52.0" lengthAdjust="spacingAndGlyphs" >Filter</text><path d="M1819 173 H1851 V179 L1839 190 M1819 173 V179 L1831 190 V204" fill="none" stroke="#b3b3b3" stroke-width="2" /><path d="M1838 191 L1851 204 M1851 191 L1838 204" fill="none" stroke="#b3b3b3" stroke-width="2" /><text x="1860.0" y="199.5" font-family="Liberation Sans" font-size="25" fill="#a3a3a3" font-weight="normal" font-style="normal" textLength="52.6" lengthAdjust="spacingAndGlyphs" >Clear</text><path d="M1819 225 H1851 V231 L1839 242 M1819 225 V231 L1831 242 V256" fill="none" stroke="#b3b3b3" stroke-width="2" /><path d="M1837 246 A7.5 7.5 0 0 1 1851 243 M1851 251 A7.5 7.5 0 0 1 1837 254" fill="none" stroke="#b3b3b3" stroke-width="2" /><text x="1860.0" y="250.5" font-family="Liberation Sans" font-size="25" fill="#a3a3a3" font-weight="normal" font-style="normal" textLength="82.0" lengthAdjust="spacingAndGlyphs" >Reapply</text><path d="M1819 277 H1851 V283 L1839 294 M1819 277 V283 L1831 294 V308" fill="none" stroke="#3b3b3b" stroke-width="2" /><circle cx="1841" cy="299" r="6" fill="none" stroke="#1d8ad8" stroke-width="2.5" /><circle cx="1841" cy="299" r="2.2" fill="#1d8ad8" stroke="none" stroke-width="1" /><path d="M1841 290 V293 M1841 305 V308 M1832 299 H1835 M1847 299 H1850 M1835 293 l2 2 M1845 303 l2 2 M1847 293 l-2 2 M1835 305 l2 -2" fill="none" stroke="#1d8ad8" stroke-width="2" /><text x="1860.0" y="302.5" font-family="Liberation Sans" font-size="25" fill="#242424" font-weight="normal" font-style="normal" textLength="103.0" lengthAdjust="spacingAndGlyphs" >Advanced</text><text x="1716.8" y="343.5" font-family="Liberation Sans" font-size="21.5" fill="#424242" font-weight="normal" font-style="normal" textLength="110.2" lengthAdjust="spacingAndGlyphs" >Sort &amp; Filter</text><path d="M2043 183 H2067 M2043 191 H2067 M2049.7 199 H2067" fill="none" stroke="#3b3b3b" stroke-width="2" /><path d="M2045.5 198.5 C2036 202 2033.5 213 2038 219 C2042 223.5 2050 223 2060 222 M2050 213 L2060 222.2 L2050 233" fill="none" stroke="#1d8ad8" stroke-width="2" /><rect x="2075.4" y="174.3" width="19" height="55.1" rx="0" fill="#f7f7f7" stroke="#3b3b3b" stroke-width="2.2" /><line x1="2075.4" y1="192.4" x2="2094.4" y2="192.4" stroke="#3b3b3b" stroke-width="2" /><line x1="2075.4" y1="210.7" x2="2094.4" y2="210.7" stroke="#3b3b3b" stroke-width="2" /><path d="M2081 183 H2089 M2081 201 H2089 M2081 218.8 H2089" fill="none" stroke="#1d8ad8" stroke-width="2" /><text x="2031.0" y="264.0" font-family="Liberation Sans" font-size="25" fill="#242424" font-weight="normal" font-style="normal" textLength="71.7" lengthAdjust="spacingAndGlyphs" >Text to</text><text x="2020.5" y="296.5" font-family="Liberation Sans" font-size="25" fill="#242424" font-weight="normal" font-style="normal" textLength="93.2" lengthAdjust="spacingAndGlyphs" >Columns</text><path d="M2146.5 182.2 L2154.9 174.3 V182.2 Z" fill="#8cbfee" stroke="none" stroke-width="1" /><rect x="2154.9" y="174.3" width="8.5" height="27" rx="0" fill="#f7f7f7" stroke="none" stroke-width="1" /><path d="M2146.5 182.2 H2163.4 M2132.2 193.3 H2163.4" fill="none" stroke="#7a7a7a" stroke-width="1.6" /><path d="M2154.4 174.3 H2163.4 V201.3 H2132.2 V192.3 H2140.6" fill="none" stroke="#3b3b3b" stroke-width="2" /><path d="M2140.6 188 V201.3 M2154.9 174.3 V201.3 M2140.6 193.3 H2154.9 M2146.5 182.2 L2154.9 174.3" fill="none" stroke="#0f6cbd" stroke-width="2" /><path d="M2138 171.6 H2145.6 L2141.4 178.8 H2144.4 L2132.8 189.6 L2136.2 181 H2132.2 Z" fill="#e8780c" stroke="none" stroke-width="1" /><rect x="2136.4" y="224" width="23.3" height="11.1" rx="0" fill="#8cbfee" stroke="#0f6cbd" stroke-width="2" /><path d="M2136.4 235.1 V244.7 M2159.7 235.1 V241.5" fill="none" stroke="#3b3b3b" stroke-width="2" /><path d="M2136.4 244.7 H2147 L2150.7 250.2 L2147 255.8 H2136.4 Z" fill="#8cbfee" stroke="#0f6cbd" stroke-width="2" /><path d="M2150.6 242.2 L2163.6 255.6 M2163.6 242.2 L2150.6 255.6" fill="none" stroke="#e03c3c" stroke-width="1.9" /><path d="M2142.8 280.6 H2132.2 V289.1 H2149.6 M2142.8 296.5 H2132.2 V305.5 H2143.3" fill="none" stroke="#3b3b3b" stroke-width="2" /><path d="M2146.5 281 L2152.8 287.2 L2163.4 276.6" fill="none" stroke="#2ea44f" stroke-width="2" /><circle cx="2153.9" cy="299.7" r="7" fill="none" stroke="#e03c3c" stroke-width="2.2" /><line x1="2149.2" y1="295" x2="2158.6" y2="304.4" stroke="#e03c3c" stroke-width="2.2" /><path d="M2190.5 289.6 L2195.7 294.8 L2200.9 289.6" fill="none" stroke="#3b3b3b" stroke-width="2" /><path d="M2245.9 177.5 V174.3 H2232.7 V199.2 H2245.9 V193.9" fill="none" stroke="#3b3b3b" stroke-width="2" /><path d="M2232.7 182.8 H2238 M2232.7 190.7 H2238" fill="none" stroke="#7a7a7a" stroke-width="1.6" /><path d="M2234.3 187 H2247 M2241.7 181.8 L2247 187 L2241.7 192.2" fill="none" stroke="#1d8ad8" stroke-width="2.2" /><rect x="2250.7" y="182.4" width="12.7" height="8.6" rx="0" fill="#ffffff" stroke="#1d8ad8" stroke-width="2" /><line x1="2254.4" y1="186.7" x2="2259.7" y2="186.7" stroke="#7a7a7a" stroke-width="1.6" /><path d="M2232.2 233 C2232.2 226 2240 224 2248 224 C2254 224 2258 226 2260 229 L2264 232.5 V251 L2254.5 255.8 H2240 L2232.2 251 Z" fill="#72bf44" stroke="none" stroke-width="1" /><path d="M2237.5 249 V234 L2249 229 M2240 251 V236 L2253 230.5 L2257 232" fill="none" stroke="#e8f5dd" stroke-width="1.4" /><path d="M2251.5 234 V254 M2257.3 233.5 V253 M2247 240 H2264 M2247 246.3 H2264" fill="none" stroke="#ffffff" stroke-width="1.5" /><path d="M2242 250 L2246 246 V242 M2244 241 L2246 239 L2248 241" fill="none" stroke="#ffffff" stroke-width="1.3" /><path d="M2277 237 L2282.3 242.3 L2287.6 237" fill="none" stroke="#3b3b3b" stroke-width="2" /><rect x="2233.2" y="277.4" width="30.2" height="29.7" rx="0" fill="#f7f7f7" stroke="#3b3b3b" stroke-width="2" /><rect x="2234.2" y="278.4" width="28.2" height="4" rx="0" fill="#bdbdbd" stroke="none" stroke-width="1" /><path d="M2256 290 H2262 M2256 298 H2262 M2237 300 V306 M2243 302 V306" fill="none" stroke="#9a9a9a" stroke-width="1.4" /><circle cx="2245.4" cy="289.6" r="8.3" fill="#f7f7f7" stroke="#3b3b3b" stroke-width="2" /><line x1="2251.2" y1="296.2" x2="2263.2" y2="307.4" stroke="#3b3b3b" stroke-width="2.2" /><rect x="2240.6" y="288.6" width="3.4" height="4.2" rx="0" fill="#0f6cbd" stroke="none" stroke-width="1" /><rect x="2244.9" y="284.5" width="3.5" height="8.3" rx="0" fill="none" stroke="#3b3b3b" stroke-width="1.4" /><text x="2111.0" y="343.5" font-family="Liberation Sans" font-size="21.5" fill="#424242" font-weight="normal" font-style="normal" textLength="95.0" lengthAdjust="spacingAndGlyphs" >Data Tools</text><rect x="2368.2" y="181.1" width="54.5" height="42.4" rx="0" fill="#f7f7f7" stroke="none" stroke-width="1" /><path d="M2386 194.8 H2422.7 M2386 208.8 H2410 M2386 181 V223.5 M2403.7 181 V223.5" fill="none" stroke="#6e6e6e" stroke-width="1.8" /><path d="M2386 181.1 H2422.7 V197.2 M2368.2 194.8 V209 M2386 223.3 H2411" fill="none" stroke="#2b2b2b" stroke-width="2" /><rect x="2368.2" y="181.1" width="17.8" height="13.7" rx="0" fill="#8cc4f5" stroke="#0f6cbd" stroke-width="2" /><rect x="2368.2" y="208.8" width="17.8" height="14.5" rx="0" fill="#8cc4f5" stroke="#0f6cbd" stroke-width="2" /><path d="M2409 210 C2409 203.5 2413.5 200.5 2418 200.5 C2422.8 200.5 2426.8 203.8 2426.8 208.5 C2426.8 213.5 2422.5 215.8 2419.5 218.8 C2417.2 221.2 2416.3 223.5 2416.3 226.5" fill="none" stroke="#2a8ad4" stroke-width="2.2" /><rect x="2414.5" y="230.2" width="3.6" height="3.6" rx="0" fill="#2a8ad4" stroke="none" stroke-width="1" /><text x="2355.5" y="264.0" font-family="Liberation Sans" font-size="25" fill="#242424" font-weight="normal" font-style="normal" textLength="79.5" lengthAdjust="spacingAndGlyphs" >What-If</text><text x="2341.5" y="296.5" font-family="Liberation Sans" font-size="25" fill="#242424" font-weight="normal" font-style="normal" textLength="83.5" lengthAdjust="spacingAndGlyphs" >Analysis</text><path d="M2435 284 L2440 289 L2445 284" fill="none" stroke="#242424" stroke-width="2" /><rect x="2481" y="177" width="54" height="40" rx="0" fill="#f7f7f7" stroke="#3b3b3b" stroke-width="2.2" /><path d="M2481 217 V225 H2496 L2504 217" fill="#f7f7f7" stroke="#3b3b3b" stroke-width="2.2" /><line x1="2498.8" y1="177" x2="2498.8" y2="217" stroke="#6e6e6e" stroke-width="1.6" /><line x1="2517" y1="177" x2="2517" y2="217" stroke="#6e6e6e" stroke-width="1.6" /><line x1="2481" y1="190.6" x2="2535" y2="190.6" stroke="#6e6e6e" stroke-width="1.6" /><line x1="2481" y1="205" x2="2535" y2="205" stroke="#6e6e6e" stroke-width="1.6" /><path d="M2482 210 L2491 201 L2497 206 L2507 197" fill="none" stroke="#1d8ad8" stroke-width="2.2" /><path d="M2506 197 L2512 192 L2518 196 L2531 183 M2524 183 H2532 V191" fill="none" stroke="#e03c3c" stroke-width="2.2" /><text x="2465.0" y="264.0" font-family="Liberation Sans" font-size="25" fill="#242424" font-weight="normal" font-style="normal" textLength="86.6" lengthAdjust="spacingAndGlyphs" >Forecast</text><text x="2479.0" y="296.5" font-family="Liberation Sans" font-size="25" fill="#242424" font-weight="normal" font-style="normal" textLength="59.8" lengthAdjust="spacingAndGlyphs" >Sheet</text><text x="2408.7" y="343.5" font-family="Liberation Sans" font-size="21.5" fill="#424242" font-weight="normal" font-style="normal" textLength="76.8" lengthAdjust="spacingAndGlyphs" >Forecast</text><path d="M2628 174 H2615 V188 M2615 203 V221 H2628" fill="none" stroke="#6b6b6b" stroke-width="2" /><rect x="2608" y="188" width="16" height="15" rx="0" fill="#ffffff" stroke="#3b3b3b" stroke-width="2" /><path d="M2616 191 V200 M2611.5 195.5 H2620.5" fill="none" stroke="#1d8ad8" stroke-width="2" /><rect x="2634" y="173" width="21" height="48" rx="0" fill="#ffffff" stroke="#3b3b3b" stroke-width="2.2" /><line x1="2634" y1="185" x2="2655" y2="185" stroke="#3b3b3b" stroke-width="1.8" /><line x1="2634" y1="197" x2="2655" y2="197" stroke="#3b3b3b" stroke-width="1.8" /><line x1="2634" y1="209" x2="2655" y2="209" stroke="#3b3b3b" stroke-width="1.8" /><text x="2592.0" y="261.0" font-family="Liberation Sans" font-size="25" fill="#242424" font-weight="normal" font-style="normal" textLength="77.0" lengthAdjust="spacingAndGlyphs" >Outline</text><path d="M2625 280 L2630 285 L2635 280" fill="none" stroke="#242424" stroke-width="2" /><path d="M2826 324 L2835 333 L2844 324" fill="none" stroke="#3b3b3b" stroke-width="2" /><rect x="17.5" y="373.5" width="199.5" height="41.5" rx="7" fill="#ffffff" stroke="#e0e0e0" stroke-width="1.5" /><text x="24.0" y="404.5" font-family="Liberation Sans" font-size="27" fill="#1e1e1e" font-weight="normal" font-style="normal" textLength="31.0" lengthAdjust="spacingAndGlyphs" >C2</text><path d="M188 391 L197 400 L206 391" fill="none" stroke="#333333" stroke-width="2" /><circle cx="238" cy="385.5" r="2.2" fill="#444" stroke="none" stroke-width="1" /><circle cx="238" cy="394.5" r="2.2" fill="#444" stroke="none" stroke-width="1" /><circle cx="238" cy="403.5" r="2.2" fill="#444" stroke="none" stroke-width="1" /><rect x="259.5" y="373.5" width="167.5" height="41.5" rx="7" fill="#ffffff" stroke="#e0e0e0" stroke-width="1.5" /><path d="M271 383 L294 406 M294 383 L271 406" fill="none" stroke="#b8b8b8" stroke-width="2" /><path d="M315 397 L325 406 L346 383" fill="none" stroke="#b8b8b8" stroke-width="2" /><text x="364" y="405" font-family="Liberation Serif" font-size="31" font-style="italic" fill="#333333" textLength="29" lengthAdjust="spacingAndGlyphs">fx</text><path d="M404 391 L413 400 L422 391" fill="none" stroke="#b8b8b8" stroke-width="2" /><rect x="437.5" y="373.5" width="2425.5" height="41.5" rx="7" fill="#ffffff" stroke="#e0e0e0" stroke-width="1.5" /><text x="457.3" y="404.5" font-family="Liberation Sans" font-size="27" fill="#1e1e1e" font-weight="normal" font-style="normal" textLength="136.7" lengthAdjust="spacingAndGlyphs" >2024/01/05</text><path d="M2835.5 388.5 L2845 398 L2854.5 388.5" fill="none" stroke="#8f8f8f" stroke-width="2" /><rect x="2841" y="436" width="39" height="1160" rx="0" fill="#f0f0f0" stroke="none" stroke-width="1" /><rect x="2846" y="430" width="31" height="1165" rx="15" fill="#f6f6f6" stroke="none" stroke-width="1" /><line x1="92" y1="501.3" x2="2841" y2="501.3" stroke="#c4c4c4" stroke-width="1.4" /><path d="M2853 451.5 L2861 442.5 L2869 451.5 Z" fill="#6e6e6e" stroke="#6e6e6e" stroke-width="2" stroke-linejoin="round"/><rect x="2853.5" y="465" width="15" height="770" rx="7.5" fill="#6e6e6e" stroke="none" stroke-width="1" /><path d="M2853 1577 L2861 1586 L2869 1577 Z" fill="#6e6e6e" stroke="#6e6e6e" stroke-width="2" stroke-linejoin="round"/><rect x="0" y="1596" width="2880" height="62" rx="0" fill="#f0f0f0" stroke="none" stroke-width="1" /><path d="M52 1617 L44 1626 L52 1635" fill="none" stroke="#444" stroke-width="2" /><path d="M109 1617 L117 1626 L109 1635" fill="none" stroke="#999" stroke-width="2" /><circle cx="166" cy="1626" r="3" fill="#444" stroke="none" stroke-width="1" /><circle cx="174.5" cy="1626" r="3" fill="#444" stroke="none" stroke-width="1" /><circle cx="183" cy="1626" r="3" fill="#444" stroke="none" stroke-width="1" /><text x="237.4" y="1638.0" font-family="Liberation Sans" font-size="27" fill="#262626" font-weight="normal" font-style="normal" textLength="239.6" lengthAdjust="spacingAndGlyphs" >Multi_Sort_Example</text><text x="536.0" y="1638.0" font-family="Liberation Sans" font-size="27" fill="#262626" font-weight="normal" font-style="normal" textLength="237.5" lengthAdjust="spacingAndGlyphs" >Text_Number_Issue</text><text x="832.0" y="1638.0" font-family="Liberation Sans" font-size="27" fill="#262626" font-weight="normal" font-style="normal" textLength="236.6" lengthAdjust="spacingAndGlyphs" >Blanks_And_Spaces</text><line x1="507" y1="1610" x2="507" y2="1645" stroke="#cfcfcf" stroke-width="1.5" /><line x1="802.7" y1="1610" x2="802.7" y2="1645" stroke="#cfcfcf" stroke-width="1.5" /><line x1="1096.6" y1="1610" x2="1096.6" y2="1645" stroke="#cfcfcf" stroke-width="1.5" /><line x1="1348" y1="1610" x2="1348" y2="1645" stroke="#cfcfcf" stroke-width="1.5" /><path d="M1097.6 1596 A8 8 0 0 1 1105.6 1604 V1644 A8 8 0 0 0 1113.6 1652 H1331 A8 8 0 0 0 1339 1644 V1604 A8 8 0 0 1 1347 1596 Z" fill="#ffffff" stroke="none" stroke-width="1" /><path d="M1097.6 1596 A8 8 0 0 1 1105.6 1604 V1644 A8 8 0 0 0 1113.6 1652 H1331 A8 8 0 0 0 1339 1644 V1604 A8 8 0 0 1 1347 1596" fill="none" stroke="#dedede" stroke-width="1.2" /><text x="1124.6" y="1633.0" font-family="Liberation Sans" font-size="27" fill="#1e1e1e" font-weight="normal" font-style="normal" textLength="194.0" lengthAdjust="spacingAndGlyphs" >Text_Date_Issue</text><rect x="1121.9" y="1641.6" width="200.8" height="4.2" rx="0" fill="#107c41" stroke="none" stroke-width="1" /><path d="M1443 1614 V1638 M1431 1626 H1455" fill="none" stroke="#444" stroke-width="2" /><rect x="1735" y="1618.4" width="4" height="4" rx="0" fill="#333" stroke="none" stroke-width="1" /><rect x="1735" y="1626.4" width="4" height="4" rx="0" fill="#333" stroke="none" stroke-width="1" /><rect x="1735" y="1634.6" width="4" height="4" rx="0" fill="#333" stroke="none" stroke-width="1" /><rect x="1768" y="1610.5" width="1076" height="32.5" rx="16" fill="#f6f6f6" stroke="none" stroke-width="1" /><path d="M1792.6 1619.5 V1634.5 Q1792.6 1636.5 1790.8 1635.3 L1780.5 1628.3 Q1779 1627 1780.5 1625.8 L1790.8 1618.8 Q1792.6 1617.6 1792.6 1619.5 Z" fill="#6e6e6e" stroke="none" stroke-width="1" /><rect x="1803" y="1618.8" width="923" height="16.2" rx="8.1" fill="#6e6e6e" stroke="none" stroke-width="1" /><path d="M2820 1619.5 V1634.5 Q2820 1636.5 2821.8 1635.3 L2832.1 1628.3 Q2833.6 1627 2832.1 1625.8 L2821.8 1618.8 Q2820 1617.6 2820 1619.5 Z" fill="#6e6e6e" stroke="none" stroke-width="1" /><line x1="0" y1="1596.3" x2="1098" y2="1596.3" stroke="#dcdcdc" stroke-width="1" /><line x1="1347" y1="1596.3" x2="2841" y2="1596.3" stroke="#dcdcdc" stroke-width="1" /><rect x="0" y="1660" width="2880" height="45" rx="0" fill="#f5f5f5" stroke="none" stroke-width="1" /><line x1="0" y1="1704.5" x2="2880" y2="1704.5" stroke="#d6d6d6" stroke-width="1.5" /><text x="23.8" y="1692.5" font-family="Liberation Sans" font-size="21.5" fill="#444444" font-weight="normal" font-style="normal" textLength="55.9" lengthAdjust="spacingAndGlyphs" >Ready</text><circle cx="129.9" cy="1673" r="3.7" fill="none" stroke="#1e1e1e" stroke-width="1.8" /><path d="M119 1678.5 C118.5 1674 122 1674 124.5 1676.5 C127 1679 132.5 1679 135 1676.5 C137.5 1674 141 1674 140.5 1678.5 C140 1681 137 1681.5 134.8 1681.5 V1685.5 M124.8 1681.5 C122 1681.5 119.5 1681 119 1678.5 M124.8 1681.5 C125.5 1686 124.8 1690 123.5 1693 C122.5 1696 124 1697.5 127 1696.5" fill="none" stroke="#1e1e1e" stroke-width="1.8" /><path d="M132 1691.5 L137.1 1696.6 L147.3 1686" fill="none" stroke="#1e1e1e" stroke-width="1.8" /><text x="153.5" y="1692.5" font-family="Liberation Sans" font-size="21.5" fill="#444444" font-weight="normal" font-style="normal" textLength="226.7" lengthAdjust="spacingAndGlyphs" >Accessibility: Good to go</text><text x="2168.8" y="1692.0" font-family="Liberation Sans" font-size="21.5" fill="#444444" font-weight="normal" font-style="normal" textLength="78.2" lengthAdjust="spacingAndGlyphs" >Count: 4</text><rect x="2284" y="1662" width="79.6" height="42" rx="0" fill="#e0e0e0" stroke="none" stroke-width="1" /><rect x="2310" y="1671" width="25" height="25" rx="0" fill="none" stroke="#333" stroke-width="2" /><path d="M2310 1679.3 H2335 M2310 1687.6 H2335 M2318.3 1671 V1696 M2326.6 1671 V1696" fill="none" stroke="#333" stroke-width="1.6" /><rect x="2391" y="1671" width="26" height="26" rx="0" fill="none" stroke="#333" stroke-width="2" /><rect x="2396" y="1676" width="16" height="16" rx="0" fill="none" stroke="#333" stroke-width="1.6" /><path d="M2399 1680 H2409 M2399 1684 H2409 M2399 1688 H2409" fill="none" stroke="#333" stroke-width="1.4" /><rect x="2471" y="1671" width="27" height="26" rx="0" fill="none" stroke="#333" stroke-width="2" /><path d="M2480 1671 V1684 H2489 V1671" fill="none" stroke="#333" stroke-width="1.8" /><line x1="2536" y1="1683" x2="2550" y2="1683" stroke="#444" stroke-width="1.6" /><line x1="2563" y1="1683" x2="2761" y2="1683" stroke="#888" stroke-width="1.5" /><line x1="2662" y1="1677" x2="2662" y2="1689" stroke="#666" stroke-width="1.5" /><rect x="2677" y="1672" width="9" height="22" rx="1" fill="#444" stroke="none" stroke-width="1" /><path d="M2772 1683 H2788 M2780 1675 V1691" fill="none" stroke="#444" stroke-width="1.6" /><text x="2815.0" y="1692.0" font-family="Liberation Sans" font-size="21.5" fill="#444444" font-weight="normal" font-style="normal" textLength="47.6" lengthAdjust="spacingAndGlyphs" >163%</text><rect x="0" y="1705.5" width="2880" height="94.5" rx="0" fill="#eeeeee" stroke="none" stroke-width="1" /><path d="M49 1726 L77 1735 V1765 L49 1773 Z" fill="#e9a21c" stroke="none" stroke-width="1" /><path d="M53 1730 L73 1737 V1763 L53 1769 Z" fill="#d68a12" stroke="none" stroke-width="1" /><path d="M43 1742 H49 C57 1737 70 1737 78 1742 H82" fill="none" stroke="#f3c33f" stroke-width="3.2" stroke-linecap="round"/><path d="M43 1751.7 H49 C57 1746.7 70 1746.7 78 1751.7 H82" fill="none" stroke="#f3c33f" stroke-width="3.2" stroke-linecap="round"/><path d="M43 1761 H49 C57 1756 70 1756 78 1761 H82" fill="none" stroke="#f3c33f" stroke-width="3.2" stroke-linecap="round"/><circle cx="76" cy="1731.8" r="15.5" fill="#c8221c" stroke="none" stroke-width="1" /><text x="70.5" y="1739.2" font-family="Liberation Sans" font-size="19.5" fill="#ffffff" font-weight="normal" font-style="normal" textLength="11.0" lengthAdjust="spacingAndGlyphs" >3</text><defs><linearGradient id="wg" x1="0" y1="0" x2="1" y2="1"><stop offset="0" stop-color="#56c8f5"/><stop offset="1" stop-color="#0a6fd6"/></linearGradient></defs><rect x="840" y="1729.5" width="22.5" height="22.5" rx="1.5" fill="url(#wg)" stroke="none" stroke-width="1" /><rect x="863.5" y="1729.5" width="22.5" height="22.5" rx="1.5" fill="url(#wg)" stroke="none" stroke-width="1" /><rect x="840" y="1753" width="22.5" height="22.5" rx="1.5" fill="url(#wg)" stroke="none" stroke-width="1" /><rect x="863.5" y="1753" width="22.5" height="22.5" rx="1.5" fill="url(#wg)" stroke="none" stroke-width="1" /><rect x="914.5" y="1721" width="436" height="62" rx="31" fill="#fafafa" stroke="#d6d6d6" stroke-width="1.5" /><circle cx="946" cy="1746.5" r="10.5" fill="none" stroke="#1f1f1f" stroke-width="3" /><line x1="954" y1="1755" x2="964" y2="1765" stroke="#1f1f1f" stroke-width="3.2" stroke-linecap="round"/><rect x="1389" y="1730" width="35" height="31" rx="3" fill="#f4f4f4" stroke="#e2e2e2" stroke-width="1" /><rect x="1377" y="1742" width="36" height="32" rx="3" fill="#2a2a2a" stroke="none" stroke-width="1" /><rect x="1389" y="1742" width="24" height="19" rx="0" fill="#bdbdbd" stroke="none" stroke-width="1" /><rect x="1465" y="1731.5" width="48" height="42" rx="3" fill="#f7c440" stroke="none" stroke-width="1" /><path d="M1465 1735 V1733 Q1465 1731.5 1467 1731.5 H1478 L1482 1736 H1465 Z" fill="#e0a020" stroke="none" stroke-width="1" /><rect x="1473" y="1759" width="32" height="15" rx="4" fill="#1b78d8" stroke="none" stroke-width="1" /><line x1="1480" y1="1766" x2="1498" y2="1766" stroke="#0b4f99" stroke-width="2" /><circle cx="1576.4" cy="1752" r="24" fill="#2da94f"/><path d="M1576.4 1752 L1555.6000000000001 1740 A24 24 0 0 1 1597.2 1740 Z" fill="#e94235"/><path d="M1576.4 1752 L1597.2 1740 A24 24 0 0 1 1576.4 1776 Z" fill="#fbbc05"/><circle cx="1576.4" cy="1752" r="11" fill="#ffffff" stroke="none" stroke-width="1" /><circle cx="1576.4" cy="1752" r="8.5" fill="#1a73e8" stroke="none" stroke-width="1" /><circle cx="1595.4" cy="1733.6" r="16.5" fill="#8c7468" stroke="none" stroke-width="1" /><circle cx="1595.4" cy="1729" r="7" fill="#e8c8b0" stroke="none" stroke-width="1" /><circle cx="1752.8" cy="1752" r="24" fill="#2da94f"/><path d="M1752.8 1752 L1732.0 1740 A24 24 0 0 1 1773.6 1740 Z" fill="#e94235"/><path d="M1752.8 1752 L1773.6 1740 A24 24 0 0 1 1752.8 1776 Z" fill="#fbbc05"/><circle cx="1752.8" cy="1752" r="11" fill="#ffffff" stroke="none" stroke-width="1" /><circle cx="1752.8" cy="1752" r="8.5" fill="#1a73e8" stroke="none" stroke-width="1" /><circle cx="1770.5" cy="1733.6" r="16.5" fill="#3f6b3a" stroke="none" stroke-width="1" /><path d="M1760 1745 C1765 1728 1775 1722 1782 1730 C1778 1738 1770 1742 1760 1745Z" fill="#e06a2a" stroke="none" stroke-width="1" /><circle cx="1928.7" cy="1752" r="24" fill="#2da94f"/><path d="M1928.7 1752 L1907.9 1740 A24 24 0 0 1 1949.5 1740 Z" fill="#e94235"/><path d="M1928.7 1752 L1949.5 1740 A24 24 0 0 1 1928.7 1776 Z" fill="#fbbc05"/><circle cx="1928.7" cy="1752" r="11" fill="#ffffff" stroke="none" stroke-width="1" /><circle cx="1928.7" cy="1752" r="8.5" fill="#1a73e8" stroke="none" stroke-width="1" /><circle cx="1946.4" cy="1733.6" r="16.5" fill="#1a93a3" stroke="none" stroke-width="1" /><circle cx="1665" cy="1752" r="23" fill="#f7f7f7" stroke="none" stroke-width="1" /><rect x="1648" y="1748" width="16" height="5" rx="2.5" fill="#e01e5a" stroke="none" stroke-width="1" /><rect x="1659" y="1758" width="5" height="14" rx="2.5" fill="#e01e5a" stroke="none" stroke-width="1" /><rect x="1659" y="1733" width="5" height="14" rx="2.5" fill="#36c5f0" stroke="none" stroke-width="1" /><rect x="1645" y="1744" width="12" height="5" rx="2.5" fill="#36c5f0" stroke="none" stroke-width="1" /><rect x="1667" y="1755" width="16" height="5" rx="2.5" fill="#ecb22e" stroke="none" stroke-width="1" /><rect x="1667" y="1760" width="5" height="12" rx="2.5" fill="#ecb22e" stroke="none" stroke-width="1" /><rect x="1667" y="1733" width="5" height="16" rx="2.5" fill="#2eb67d" stroke="none" stroke-width="1" /><circle cx="1682.7" cy="1733" r="14.5" fill="#c0143c" stroke="none" stroke-width="1" /><text x="1677.0" y="1741.0" font-family="Liberation Sans" font-size="20" fill="#ffffff" font-weight="normal" font-style="normal" >5</text><rect x="1817" y="1728" width="48" height="48" rx="4" fill="#fee500" stroke="none" stroke-width="1" /><ellipse cx="1841" cy="1750" rx="18.5" ry="14" fill="#3a1d1d"/><path d="M1830 1760 L1828 1771 L1838 1762 Z" fill="#3a1d1d" stroke="none" stroke-width="1" /><text x="1828.0" y="1756.0" font-family="Liberation Sans" font-size="13" fill="#fee500" font-weight="bold" font-style="normal" textLength="26.0" lengthAdjust="spacingAndGlyphs" >TALK</text><rect x="2002" y="1729" width="33" height="45" rx="4" fill="#1f8a3f" stroke="none" stroke-width="1" /><rect x="2002" y="1729" width="16" height="22" rx="3" fill="#4fd36a" stroke="none" stroke-width="1" /><rect x="2018" y="1729" width="17" height="15" rx="3" fill="#8fe98a" stroke="none" stroke-width="1" /><rect x="2018" y="1744" width="17" height="30" rx="0" fill="#177a36" stroke="none" stroke-width="1" /><rect x="1993" y="1748" width="22" height="22" rx="3" fill="#0d5c2b" stroke="none" stroke-width="1" /><path d="M1998 1753.5 L2010 1764.5 M2010 1753.5 L1998 1764.5" fill="none" stroke="#fff" stroke-width="2.6" /><rect x="1483" y="1784.5" width="12" height="5" rx="2.5" fill="#8a8a8a" stroke="none" stroke-width="1" /><rect x="1571" y="1784.5" width="12" height="5" rx="2.5" fill="#8a8a8a" stroke="none" stroke-width="1" /><rect x="1659" y="1784.5" width="12" height="5" rx="2.5" fill="#8a8a8a" stroke="none" stroke-width="1" /><rect x="1747" y="1784.5" width="12" height="5" rx="2.5" fill="#8a8a8a" stroke="none" stroke-width="1" /><rect x="1835" y="1784.5" width="12" height="5" rx="2.5" fill="#8a8a8a" stroke="none" stroke-width="1" /><rect x="1923" y="1784.5" width="12" height="5" rx="2.5" fill="#8a8a8a" stroke="none" stroke-width="1" /><rect x="2011" y="1784.5" width="12" height="5" rx="2.5" fill="#8a8a8a" stroke="none" stroke-width="1" /><path d="M2386 1757 L2396 1746 L2406 1757" fill="none" stroke="#1b1b1b" stroke-width="2.2" /><path d="M2448 1768 L2460 1737 L2472 1768 M2453 1755 H2467" fill="none" stroke="#1b1b1b" stroke-width="2" /><path d="M2508 1748 C2518 1738 2530 1738 2540 1748 M2513 1753 C2520 1746 2528 1746 2535 1753 M2518 1758 C2522 1754 2526 1754 2530 1758" fill="none" stroke="#1b1b1b" stroke-width="2.2" /><circle cx="2524" cy="1761" r="2.5" fill="#1b1b1b" stroke="none" stroke-width="1" /><path d="M2557 1746 H2564 L2573 1739 V1765 L2564 1758 H2557 Z M2577 1745 C2580 1749 2580 1755 2577 1759 M2581 1741 C2586 1747 2586 1757 2581 1763 M2585 1738 C2591 1746 2591 1758 2585 1766" fill="none" stroke="#1b1b1b" stroke-width="2" /><rect x="2605" y="1744" width="27" height="17" rx="3" fill="none" stroke="#1b1b1b" stroke-width="2.2" /><rect x="2609" y="1748" width="19" height="9" rx="0" fill="#1b1b1b" stroke="none" stroke-width="1" /><rect x="2632" y="1749" width="4" height="7" rx="1" fill="#1b1b1b" stroke="none" stroke-width="1" /><path d="M2614 1737 L2607 1747 H2613 L2609 1755" fill="none" stroke="#1b1b1b" stroke-width="2" /><text x="2750.0" y="1743.5" font-family="Liberation Sans" font-size="24" fill="#1b1b1b" font-weight="normal" font-style="normal" textLength="42.5" lengthAdjust="spacingAndGlyphs" >9:52</text><text x="2669.4" y="1775.5" font-family="Liberation Sans" font-size="24" fill="#1b1b1b" font-weight="normal" font-style="normal" textLength="124.2" lengthAdjust="spacingAndGlyphs" >2026-01-18</text><path d="M2813 1760 C2816 1757 2815 1745 2821 1742 C2828 1738 2834 1742 2834 1750 V1758 L2837 1762 H2811 Z" fill="#1b1b1b" stroke="none" stroke-width="1" /><rect x="2819" y="1764" width="10" height="3" rx="1.5" fill="#1b1b1b" stroke="none" stroke-width="1" /><text x="2815.0" y="1757.0" font-family="Liberation Sans" font-size="14" fill="#ffffff" font-weight="bold" font-style="normal" >z</text><text x="2828.0" y="1746.0" font-family="Liberation Sans" font-size="12" fill="#1b1b1b" font-weight="bold" font-style="normal" >z</text><rect x="694" y="303" width="1011" height="933.5" rx="14" fill="#f0f0f0" stroke="none" stroke-width="1" filter="url(#dsh)"/><rect x="694.5" y="303.5" width="1010" height="932.5" rx="14" fill="#f0f0f0" stroke="#b4b4b4" stroke-width="1.2" /><rect x="695.2" y="304.2" width="1008.6" height="57" rx="13" fill="#f3f3f3" stroke="none" stroke-width="1" /><rect x="695.2" y="343" width="1008.6" height="18" rx="0" fill="#f3f3f3" stroke="none" stroke-width="1" /><text x="708.0" y="339.8" font-family="Liberation Sans" font-size="25.3" fill="#8a8a8a" font-weight="normal" font-style="normal" textLength="475.5" lengthAdjust="spacingAndGlyphs" >Convert Text to Columns Wizard - Step 3 of 3</text><text x="1558.5" y="339.0" font-family="Liberation Sans" font-size="25" fill="#8a8a8a" font-weight="normal" font-style="normal" textLength="14.0" lengthAdjust="spacingAndGlyphs" >?</text><path d="M1648 321 L1667 340 M1667 321 L1648 340" fill="none" stroke="#7a7a7a" stroke-width="2" /><text x="708.0" y="398.0" font-family="Liberation Sans" font-size="21.8" fill="#1a1a1a" font-weight="normal" font-style="normal" textLength="599.5" lengthAdjust="spacingAndGlyphs" >This screen lets you select each column and set the Data Format.</text><rect x="707.5" y="438.5" width="331.5" height="228.5" rx="0" fill="none" stroke="#dadada" stroke-width="1.2" /><rect x="717" y="428" width="192" height="22" rx="0" fill="#f0f0f0" stroke="none" stroke-width="1" /><text x="719.0" y="446.6" font-family="Liberation Sans" font-size="21.8" fill="#1a1a1a" font-weight="normal" font-style="normal" textLength="186.6" lengthAdjust="spacingAndGlyphs" >Column data format</text><circle cx="737.6" cy="487.7" r="12.5" fill="#f5f5f5" stroke="#555555" stroke-width="1.6" /><text x="759.5" y="496.2" font-family="Liberation Sans" font-size="21.8" fill="#1a1a1a" font-weight="normal" font-style="normal" textLength="70.0" lengthAdjust="spacingAndGlyphs" >General</text><line x1="759.5" y1="498.3" x2="772.8" y2="498.3" stroke="#1a1a1a" stroke-width="1.8" /><circle cx="737.6" cy="533" r="12.5" fill="#f5f5f5" stroke="#555555" stroke-width="1.6" /><text x="759.5" y="541.5" font-family="Liberation Sans" font-size="21.8" fill="#1a1a1a" font-weight="normal" font-style="normal" textLength="37.8" lengthAdjust="spacingAndGlyphs" >Text</text><circle cx="737.6" cy="585.6" r="13" fill="#0067c0" stroke="none" stroke-width="1" /><circle cx="737.6" cy="585.6" r="5.5" fill="#ffffff" stroke="none" stroke-width="1" /><text x="759.5" y="594.0" font-family="Liberation Sans" font-size="21.8" fill="#1a1a1a" font-weight="normal" font-style="normal" textLength="48.5" lengthAdjust="spacingAndGlyphs" >Date:</text><line x1="759.5" y1="596.5" x2="774" y2="596.5" stroke="#1a1a1a" stroke-width="1.8" /><circle cx="737.6" cy="638" r="12.5" fill="#f5f5f5" stroke="#555555" stroke-width="1.6" /><text x="759.5" y="646.5" font-family="Liberation Sans" font-size="21.8" fill="#1a1a1a" font-weight="normal" font-style="normal" textLength="259.1" lengthAdjust="spacingAndGlyphs" >Do not import column (skip)</text><line x1="829.5" y1="648.7" x2="834.5" y2="648.7" stroke="#1a1a1a" stroke-width="1.8" /><rect x="830.5" y="560.5" width="182.5" height="48.5" rx="0" fill="#ffffff" stroke="#a8a8a8" stroke-width="1.2" /><rect x="978.3" y="562.3" width="33.2" height="45.2" rx="2" fill="#fafafa" stroke="#cfcfcf" stroke-width="1.2" /><text x="838.0" y="594.0" font-family="Liberation Sans" font-size="21.8" fill="#1a1a1a" font-weight="normal" font-style="normal" textLength="45.0" lengthAdjust="spacingAndGlyphs" >YMD</text><path d="M989 582 L995.3 588.5 L1001.6 582" fill="none" stroke="#444" stroke-width="1.4" /><rect x="691.8" y="545.7" width="340.2" height="68" rx="0" fill="none" stroke="#0050e0" stroke-width="7.6" /><text x="1059.0" y="520.0" font-family="Liberation Sans" font-size="21.8" fill="#1a1a1a" font-weight="normal" font-style="normal" textLength="623.6" lengthAdjust="spacingAndGlyphs" >&#x27;General&#x27; converts numeric values to numbers, date values to dates,</text><text x="1059.0" y="549.8" font-family="Liberation Sans" font-size="21.8" fill="#1a1a1a" font-weight="normal" font-style="normal" textLength="295.7" lengthAdjust="spacingAndGlyphs" >and all remaining values to text.</text><rect x="1300.5" y="564.5" width="147.5" height="50.5" rx="4" fill="#fbfbfb" stroke="#d4d4d4" stroke-width="1.2" /><text x="1321.5" y="598.5" font-family="Liberation Sans" font-size="21.8" fill="#1a1a1a" font-weight="normal" font-style="normal" textLength="106.2" lengthAdjust="spacingAndGlyphs" >Advanced...</text><line x1="1321.5" y1="601" x2="1335.5" y2="601" stroke="#1a1a1a" stroke-width="1.8" /><text x="708.0" y="720.5" font-family="Liberation Sans" font-size="21.8" fill="#1a1a1a" font-weight="normal" font-style="normal" textLength="109.5" lengthAdjust="spacingAndGlyphs" >Destination:</text><line x1="722" y1="723.3" x2="733" y2="723.3" stroke="#1a1a1a" stroke-width="1.8" /><rect x="836.5" y="690.5" width="856" height="43.5" rx="0" fill="#ffffff" stroke="#9a9a9a" stroke-width="1.2" /><text x="844.6" y="720.5" font-family="Liberation Sans" font-size="21.8" fill="#1a1a1a" font-weight="normal" font-style="normal" textLength="44.7" lengthAdjust="spacingAndGlyphs" >$C$2</text><rect x="1647" y="691.5" width="44.5" height="42" rx="0" fill="#ffffff" stroke="#dcdcdc" stroke-width="1" /><path d="M1656 713 L1667.5 698 L1679 713 L1670 709 V722 H1665 V709 Z" fill="#000" stroke="#000" stroke-width="1.5" stroke-linejoin="round"/><path d="M1657 726.5 H1678" fill="none" stroke="#000" stroke-width="2.2" /><rect x="707.5" y="823" width="982.5" height="314.5" rx="0" fill="none" stroke="#dadada" stroke-width="1.2" /><rect x="717" y="812" width="125" height="22" rx="0" fill="#f0f0f0" stroke="none" stroke-width="1" /><text x="719.0" y="830.8" font-family="Liberation Sans" font-size="21.8" fill="#1a1a1a" font-weight="normal" font-style="normal" textLength="120.9" lengthAdjust="spacingAndGlyphs" >Data preview</text><line x1="769" y1="833.2" x2="780" y2="833.2" stroke="#1a1a1a" stroke-width="1.8" /><rect x="725" y="880.5" width="914.5" height="28" rx="0" fill="#f0f0f0" stroke="#000000" stroke-width="1.3" /><line x1="725" y1="908" x2="1639.5" y2="908" stroke="#000" stroke-width="2" /><rect x="725" y="909" width="914.5" height="1.2" rx="0" fill="#ffffff" stroke="none" stroke-width="1" /><rect x="725" y="910.2" width="911" height="181.3" rx="0" fill="#000000" stroke="none" stroke-width="1" /><g transform="translate(727 905.2) scale(1 1.25)"><text x="0" y="0" font-family="Liberation Sans" font-size="20.5" fill="#000" textLength="35" lengthAdjust="spacingAndGlyphs">YMD</text></g><g transform="translate(0 933.1) scale(1 1.25)"><text x="732.0 744.0 756.0 768.0 780.0 792.0 804.0 816.0 828.0 840.0" y="0" font-family="Liberation Sans" font-size="20.5" fill="#ffffff" text-anchor="middle">2024/01/05</text></g><g transform="translate(0 961.0) scale(1 1.25)"><text x="732.0 744.0 756.0 768.0 780.0 792.0 804.0 816.0 828.0 840.0" y="0" font-family="Liberation Sans" font-size="20.5" fill="#ffffff" text-anchor="middle">2023/12/20</text></g><g transform="translate(0 988.9) scale(1 1.25)"><text x="732.0 744.0 756.0 768.0 780.0 792.0 804.0 816.0 828.0 840.0" y="0" font-family="Liberation Sans" font-size="20.5" fill="#ffffff" text-anchor="middle">2024/02/01</text></g><g transform="translate(0 1016.8) scale(1 1.25)"><text x="732.0 744.0 756.0 768.0 780.0 792.0 804.0 816.0 828.0 840.0" y="0" font-family="Liberation Sans" font-size="20.5" fill="#ffffff" text-anchor="middle">2023/11/15</text></g><path d="M1652 931 L1657.6 925 L1663.2 931 Z" fill="#8a8a8a" stroke="none" stroke-width="1" /><path d="M1652 1071 L1657.6 1077 L1663.2 1071 Z" fill="#8a8a8a" stroke="none" stroke-width="1" /><rect x="758" y="1107.5" width="34" height="4.5" rx="2" fill="#8a8a8a" stroke="none" stroke-width="1" /><rect x="1038.9" y="1168.5" width="146.5999999999999" height="50.5" rx="4" fill="#fdfdfd" stroke="#d0d0d0" stroke-width="1.2" /><text x="1081.0" y="1202.5" font-family="Liberation Sans" font-size="21.8" fill="#1a1a1a" font-weight="normal" font-style="normal" textLength="61.4" lengthAdjust="spacingAndGlyphs" >Cancel</text><rect x="1206.9" y="1168.5" width="146.5999999999999" height="50.5" rx="4" fill="#fdfdfd" stroke="#d0d0d0" stroke-width="1.2" /><text x="1251.6" y="1202.5" font-family="Liberation Sans" font-size="21.8" fill="#1a1a1a" font-weight="normal" font-style="normal" textLength="60.1" lengthAdjust="spacingAndGlyphs" >&lt; Back</text><line x1="1272" y1="1206.5" x2="1285" y2="1206.5" stroke="#1a1a1a" stroke-width="1.5" /><rect x="1374.5" y="1168.5" width="147" height="50.5" rx="4" fill="#fdfdfd" stroke="#d0d0d0" stroke-width="1.2" /><text x="1417.0" y="1202.5" font-family="Liberation Sans" font-size="21.8" fill="#9a9a9a" font-weight="normal" font-style="normal" textLength="61.0" lengthAdjust="spacingAndGlyphs" >Next &gt;</text><rect x="1542.5" y="1168.5" width="147.70000000000005" height="50.5" rx="4" fill="#fdfdfd" stroke="#0067c0" stroke-width="1.8" /><text x="1590.0" y="1202.5" font-family="Liberation Sans" font-size="21.8" fill="#1a1a1a" font-weight="normal" font-style="normal" textLength="52.6" lengthAdjust="spacingAndGlyphs" >Finish</text><line x1="1590" y1="1206.5" x2="1603" y2="1206.5" stroke="#1a1a1a" stroke-width="1.5" /><g transform="translate(20 1660) scale(0.09259259259259259)" fill="none" stroke="#1a1a1a" stroke-width="20" stroke-linecap="butt"><path d="M1000 705 H890 V900 H1005"/><path d="M1035 700 V915 M1035 800 H1075 M1078 690 V925"/><path d="M1145 715 H1272 C1265 790 1220 845 1145 872"/><path d="M1328 690 V925"/><path d="M1545 700 V830 M1720 700 V830 M1545 762 H1720 M1545 830 H1720"/><path d="M1632 830 V882 M1520 885 H1740"/><path d="M1960 705 H1792 V790 H1962 M1792 747 H1960"/><path d="M1880 790 V826 M1760 830 H2000"/><path d="M1880 846 C1800 846 1800 914 1880 914 C1960 914 1960 846 1880 846 Z"/></g><circle cx="149.62962962962962" cy="1733.148148148148" r="1.6" fill="#1a1a1a" stroke="none" stroke-width="1" /><circle cx="149.62962962962962" cy="1742.8703703703704" r="1.6" fill="#1a1a1a" stroke="none" stroke-width="1" /><g transform="translate(20 1660) scale(0.09259259259259259)" fill="none" stroke="#5a5a5a" stroke-width="18" stroke-linecap="butt"><path d="M892 1060 V1187 H1000"/><path d="M1017 1045 V1250 M1017 1135 H1058 M1062 1025 V1270"/><path d="M1205 1045 C1140 1045 1140 1155 1205 1155 C1270 1155 1270 1045 1205 1045 Z"/><path d="M1322 1030 V1170"/><path d="M1172 1180 H1322 V1215 H1175 V1255 H1330"/></g><g transform="translate(970 1725) scale(0.03718854592785422)" fill="none" stroke="#4a4a4a" stroke-width="42" stroke-linecap="butt"><path d="M565 425 H860 C845 610 750 720 540 785"/><path d="M870 590 H1060 M1060 380 V770"/><path d="M670 855 H1060 V1050 H670 Z"/><path d="M1440 405 V520 C1430 620 1370 700 1285 760 M1440 540 C1460 620 1510 670 1595 725"/><path d="M1695 405 V770 M1695 590 H1830 M1830 380 V770"/><path d="M1405 835 H1830 V1070"/></g><g transform="translate(2680 1720) scale(0.04957858205255329)" fill="none" stroke="#1a1a1a" stroke-width="36" stroke-linecap="butt"><path d="M490 135 C310 135 310 345 490 345 C670 345 670 135 490 135 Z"/><path d="M490 345 V440 M285 440 H705"/><path d="M975 65 V140 M810 140 H1150"/><path d="M975 195 C790 195 790 325 975 325 C1160 325 1160 195 975 195 Z"/><path d="M770 385 H1190 M975 385 V515"/></g></svg></body></html>
